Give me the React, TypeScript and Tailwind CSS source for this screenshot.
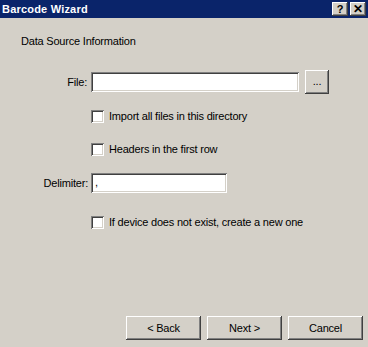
export default function App() {
  const raised =
    "bg-[#d4d0c8] shadow-[inset_-1px_-1px_#404040,inset_1px_1px_#ffffff,inset_-2px_-2px_#808080,inset_2px_2px_#d4d0c8]";
  const sunken =
    "bg-white shadow-[inset_1px_1px_#808080,inset_-1px_-1px_#ffffff,inset_2px_2px_#404040,inset_-2px_-2px_#d4d0c8]";

  const checks = [
    { label: "Import all files in this directory", mt: "mt-[16px]" },
    { label: "Headers in the first row", mt: "mt-[20px]" },
  ];

  return (
    <div
      className="w-[368px] h-[347px] bg-[#d4d0c8] flex flex-col text-[11px] tracking-[-0.2px] text-black overflow-hidden"
      style={{ fontFamily: '"Liberation Sans", Arial, sans-serif' }}
    >
      {/* title bar */}
      <div className="h-[18px] bg-[#0a246a] flex items-center pl-[2px] pr-[2px] shrink-0">
        <span className="text-white font-bold text-[11px] leading-none tracking-[0.2px]">Barcode Wizard</span>
        <div className="ml-auto flex gap-[2px]">
          <div className={`w-[16px] h-[14px] flex items-center justify-center font-bold text-[11px] leading-none ${raised}`}>?</div>
          <div className={`w-[16px] h-[14px] flex items-center justify-center font-bold text-[12px] leading-none ${raised}`}>✕</div>
        </div>
      </div>

      <div className="flex flex-col flex-1">
        <div className="ml-[21px] mt-[17px] h-[13px] leading-[13px]">Data Source Information</div>

        {/* file row */}
        <div className="flex items-center mt-[22px] h-[24px]">
          <div className="w-[87px] text-right">File:</div>
          <div className={`ml-[4px] w-[208px] h-[20px] ${sunken}`}></div>
          <div className={`ml-[6px] w-[24px] h-[24px] flex items-center justify-center leading-none pb-[2px] ${raised}`}>...</div>
        </div>

        {checks.map((c, i) => (
          <div key={i} className={`flex items-center h-[13px] ml-[91px] ${c.mt}`}>
            <div className={`w-[13px] h-[13px] ${sunken}`}></div>
            <span className="ml-[5px] leading-[13px]">{c.label}</span>
          </div>
        ))}

        {/* delimiter */}
        <div className="flex items-center mt-[17px] h-[20px]">
          <div className="w-[88px] text-right">Delimiter:</div>
          <div className={`ml-[3px] w-[136px] h-[20px] pl-[4px] leading-[18px] ${sunken}`}>,</div>
        </div>

        <div className="flex items-center h-[13px] ml-[91px] mt-[23px]">
          <div className={`w-[13px] h-[13px] ${sunken}`}></div>
          <span className="ml-[5px] leading-[13px]">If device does not exist, create a new one</span>
        </div>

        {/* buttons */}
        <div className="mt-auto mb-[7px] flex justify-end gap-[6px] pr-[5px]">
          <div className={`w-[75px] h-[24px] flex items-center justify-center ${raised}`}>&lt; Back</div>
          <div className={`w-[75px] h-[24px] flex items-center justify-center ${raised}`}>Next &gt;</div>
          <div className={`w-[75px] h-[24px] flex items-center justify-center ${raised}`}>Cancel</div>
        </div>
      </div>
    </div>
  );
}
